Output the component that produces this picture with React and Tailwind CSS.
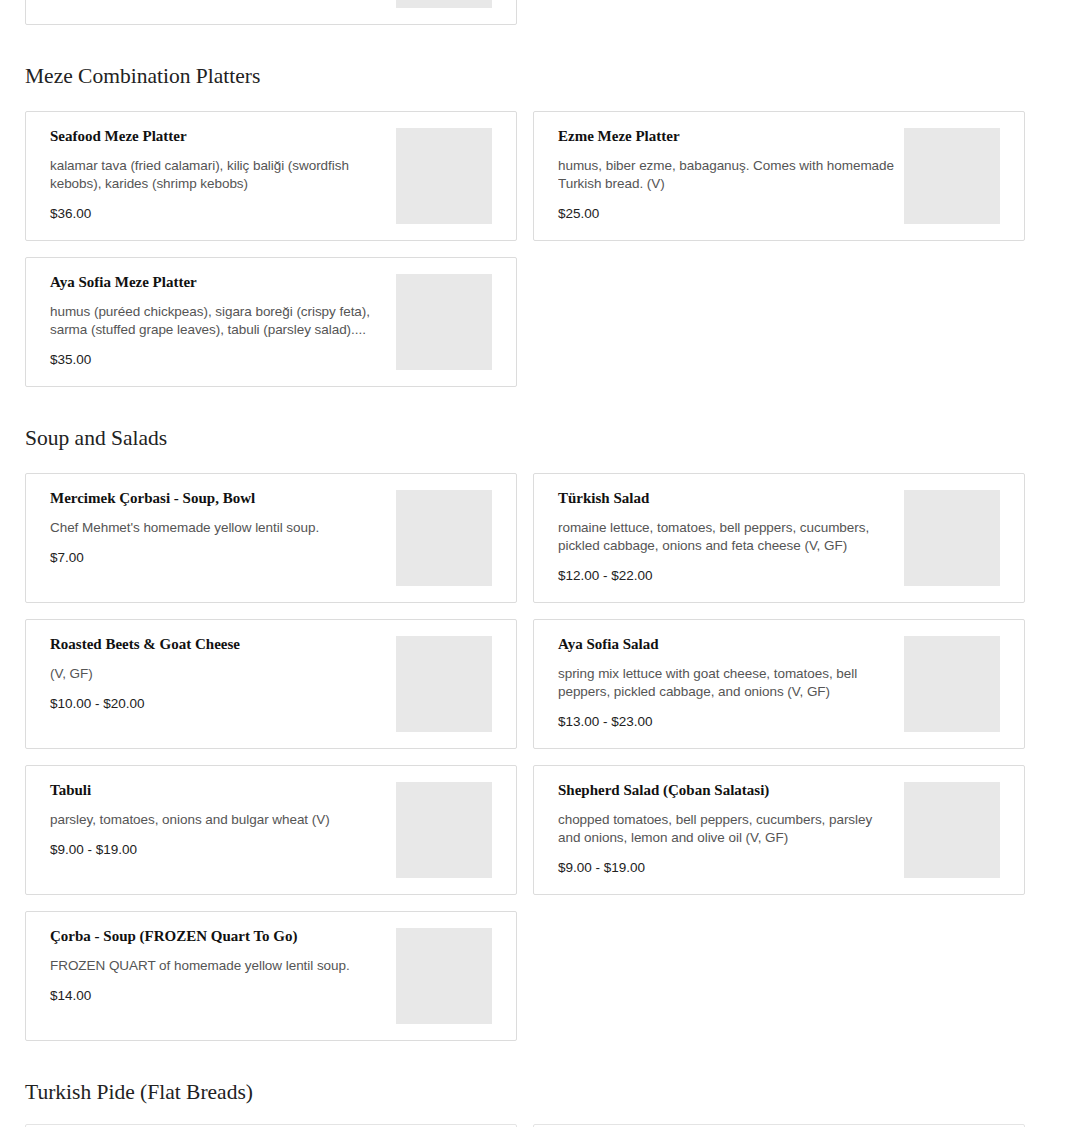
import React from "react";

const sections = [
    {
        title: "Meze Combination Platters",
        items: [
            { name: "Seafood Meze Platter", desc: "kalamar tava (fried calamari), kiliç baliği (swordfish kebobs), karides (shrimp kebobs)", price: "$36.00" },
            { name: "Ezme Meze Platter", desc: "humus, biber ezme, babaganuş. Comes with homemade Turkish bread. (V)", price: "$25.00" },
            { name: "Aya Sofia Meze Platter", desc: "humus (puréed chickpeas), sigara boreği (crispy feta), sarma (stuffed grape leaves), tabuli (parsley salad)....", price: "$35.00" },
        ],
    },
    {
        title: "Soup and Salads",
        items: [
            { name: "Mercimek Çorbasi - Soup, Bowl", desc: "Chef Mehmet's homemade yellow lentil soup.", price: "$7.00" },
            { name: "Türkish Salad", desc: "romaine lettuce, tomatoes, bell peppers, cucumbers, pickled cabbage, onions and feta cheese (V, GF)", price: "$12.00 - $22.00" },
            { name: "Roasted Beets & Goat Cheese", desc: "(V, GF)", price: "$10.00 - $20.00" },
            { name: "Aya Sofia Salad", desc: "spring mix lettuce with goat cheese, tomatoes, bell peppers, pickled cabbage, and onions (V, GF)", price: "$13.00 - $23.00" },
            { name: "Tabuli", desc: "parsley, tomatoes, onions and bulgar wheat (V)", price: "$9.00 - $19.00" },
            { name: "Shepherd Salad (Çoban Salatasi)", desc: "chopped tomatoes, bell peppers, cucumbers, parsley and onions, lemon and olive oil (V, GF)", price: "$9.00 - $19.00" },
            { name: "Çorba - Soup (FROZEN Quart To Go)", desc: "FROZEN QUART of homemade yellow lentil soup.", price: "$14.00" },
        ],
    },
];

function ItemCard({ item }) {
    return (
        <div className="flex gap-2 border border-[#dcdcdc] rounded-[2px] bg-white pt-4 pb-4 pl-6 pr-6">
            <div className="flex-1 min-w-0">
                {item.name && (
                    <h3 className="font-['Liberation_Serif',serif] font-bold text-[15px] leading-4 text-[#111]">
                        {item.name}
                    </h3>
                )}
                {item.desc && (
                    <p className="mt-[13px] text-[13.5px] leading-[18px] tracking-[-0.05px] text-[#555] line-clamp-2">{item.desc}</p>
                )}
                {item.price && <p className="mt-3 text-[13.5px] leading-[18px] text-[#222]">{item.price}</p>}
            </div>
            <div className="w-24 h-24 shrink-0 bg-[#e8e8e8]"></div>
        </div>
    );
}

export default function App() {
    return (
        <div className="min-h-screen bg-white overflow-hidden font-['Liberation_Sans',Arial,sans-serif]">
            <div className="w-[1000px] ml-[25px] mt-[-105px]">
                <div className="grid grid-cols-2 gap-4">
                    <ItemCard item={{ name: "", desc: "", price: "" }} />
                </div>
                {sections.map((s) => (
                    <section key={s.title}>
                        <h2 className="mt-[37px] mb-[21px] font-['Liberation_Serif',serif] text-[21.5px] leading-7 text-[#222]">
                            {s.title}
                        </h2>
                        <div className="grid grid-cols-2 gap-4">
                            {s.items.map((item) => (
                                <ItemCard key={item.name} item={item} />
                            ))}
                        </div>
                    </section>
                ))}
                <section>
                    <h2 className="mt-[37px] mb-[18px] font-['Liberation_Serif',serif] text-[21.5px] leading-7 text-[#222]">
                        Turkish Pide (Flat Breads)
                    </h2>
                    <div className="grid grid-cols-2 gap-4">
                        <div className="h-[130px] border border-[#e4e4e4] rounded-[2px]"></div>
                        <div className="h-[130px] border border-[#e4e4e4] rounded-[2px]"></div>
                    </div>
                </section>
            </div>
        </div>
    );
}
